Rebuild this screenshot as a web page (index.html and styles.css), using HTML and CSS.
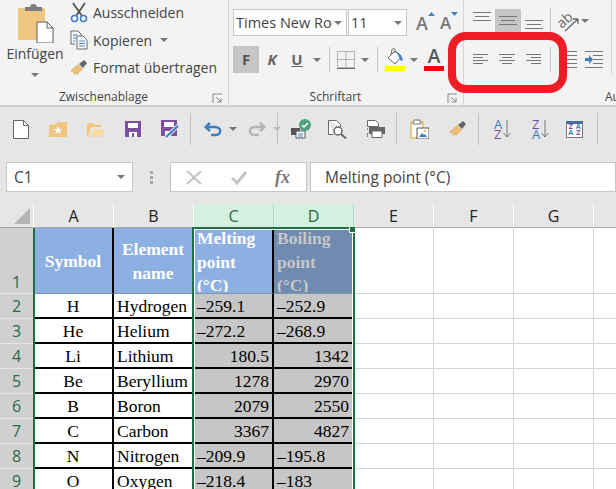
FILE: index.html
```html
<!DOCTYPE html>
<html lang="de">
<head>
<meta charset="UTF-8" />
<title>Excel</title>
<link rel="stylesheet" href="styles.css">
</head>
<body>
  <!-- Ribbon -->
  <div class="ribbon">
    <div class="group group-clip">
      <div class="group-body clip-body">
        <div class="paste">
          <svg width="40" height="41" viewBox="0 0 40 41">
            <rect x="1" y="6" width="27" height="32" fill="#efc67f"/>
            <path d="M8 9V5h5c0-4 7-4 7 0h5v4z" fill="#7d7d7d"/>
            <path d="M20 20h10l6 6v15H20z" fill="#fff" stroke="#5f5f5f" stroke-width="1"/>
            <path d="M30 20v6h6" fill="none" stroke="#5f5f5f"/>
          </svg>
          <span class="paste-label">Einfügen</span>
          <span class="caret"></span>
        </div>
        <div class="clip-list">
          <div class="clip-row">
            <svg width="18" height="21" viewBox="0 0 18 21">
              <path d="M3 1l9 13M15 1L6 14" stroke="#555" stroke-width="1.8" fill="none"/>
              <circle cx="4.5" cy="16.5" r="3" fill="none" stroke="#3f7fbf" stroke-width="1.5"/>
              <circle cx="13.5" cy="16.5" r="3" fill="none" stroke="#3f7fbf" stroke-width="1.5"/>
            </svg>
            <span>Ausschneiden</span>
          </div>
          <div class="clip-row">
            <svg width="18" height="20" viewBox="0 0 18 20">
              <path d="M1 1h7l3 3v2M1 1v13h4" fill="#fff" stroke="#666"/>
              <path d="M7 6h6l4 4v9H7z" fill="#fff" stroke="#666"/>
              <path d="M3 5h4M3 8h3M3 11h2M9 11h6M9 13.500h6M9 16h6" stroke="#3f7fbf"/>
            </svg>
            <span>Kopieren</span>
            <span class="caret caret-copy"></span>
          </div>
          <div class="clip-row">
            <svg width="18" height="18" viewBox="0 0 18 18">
              <path d="M1 11l7-6 5 5-6 6-2-1-1 1-1-3-2 0z" fill="#e9be7a"/>
              <path d="M9 5l4 4 4-5-3-3z" fill="#666"/>
            </svg>
            <span>Format übertragen</span>
          </div>
        </div>
      </div>
      <div class="group-foot">
        <span class="group-label">Zwischenablage</span>
        <svg class="launcher" width="11" height="11" viewBox="0 0 11 11"><path d="M1 10V1h9M4 4l5 5M9 5v4H5" fill="none" stroke="#888"/></svg>
      </div>
    </div>

    <div class="group group-font">
      <div class="group-body font-body">
        <div class="font-row">
          <div class="select select-font"><span>Times New Ro</span><span class="caret"></span></div>
          <div class="select select-size"><span>11</span><span class="caret"></span></div>
          <div class="grow-btn">
            <span class="big-a">A</span>
            <svg width="7" height="4" viewBox="0 0 7 4"><path d="M0 4l3.500-4L7 4z" fill="#3f7fbf"/></svg>
          </div>
          <div class="grow-btn shrink-btn">
            <span class="big-a small-a">A</span>
            <svg width="7" height="4" viewBox="0 0 7 4"><path d="M0 0l3.500 4L7 0z" fill="#3f7fbf"/></svg>
          </div>
        </div>
        <div class="font-row format-row">
          <span class="fmt fmt-on">F</span>
          <span class="fmt fmt-k">K</span>
          <span class="fmt fmt-u">U</span>
          <span class="caret"></span>
          <span class="vsep"></span>
          <svg class="border-icon" width="18" height="18" viewBox="0 0 18 18">
            <path d="M.5.500h17v16H.5zM9 .5v16M.5 8.500h17" fill="none" stroke="#777" stroke-dasharray="1 1"/>
            <path d="M0 17.500h18" stroke="#666"/>
          </svg>
          <span class="caret"></span>
          <span class="vsep"></span>
          <div class="color-btn">
            <svg width="20" height="17" viewBox="0 0 20 17">
              <path d="M3 10l7-7 6 6-6 7z" fill="#fff" stroke="#666"/>
              <path d="M6 7l1-5c0-2 3-2 3 0v3" fill="none" stroke="#666"/>
              <path d="M11 3l5 4 2 5-2 1-2-4z" fill="#3f7fbf"/>
            </svg>
            <span class="color-bar bar-yellow"></span>
          </div>
          <span class="caret"></span>
          <div class="color-btn font-color">
            <span class="color-a">A</span>
            <span class="color-bar bar-red"></span>
          </div>
        </div>
      </div>
      <div class="group-foot">
        <span class="group-label">Schriftart</span>
        <svg class="launcher" width="11" height="11" viewBox="0 0 11 11"><path d="M1 10V1h9M4 4l5 5M9 5v4H5" fill="none" stroke="#888"/></svg>
      </div>
    </div>

    <div class="group group-align">
      <div class="group-body align-body">
        <div class="align-row">
          <svg class="al" width="26" height="23" viewBox="0 0 26 23"><path d="M4 3.500h18M6 7.500h14M4 11.500h18" stroke="#777"/></svg>
          <svg class="al al-on" width="26" height="23" viewBox="0 0 26 23"><path d="M4 7.500h18M6 11.500h14M4 15.500h18" stroke="#777"/></svg>
          <svg class="al" width="26" height="23" viewBox="0 0 26 23"><path d="M4 11.500h18M6 15.500h14M4 19.500h18" stroke="#777"/></svg>
          <span class="vsep vsep-align"></span>
          <svg class="orient" width="22" height="22" viewBox="0 0 22 22">
            <path d="M7 21L20 9M20 9h-5M20 9v5" fill="none" stroke="#666" stroke-width="1.300"/>
            <text x="0" y="15" class="orient-text" transform="rotate(-42 7 12)">ab</text>
          </svg>
          <span class="caret"></span>
        </div>
        <div class="align-row align-row-2">
          <svg class="al2" width="15" height="11" viewBox="0 0 15 11"><path d="M0 .5h15M0 3.500h10M0 6.500h15M0 9.500h10" stroke="#777"/></svg>
          <svg class="al2" width="16" height="11" viewBox="0 0 16 11"><path d="M0 .5h16M3 3.500h10M0 6.500h16M3 9.500h10" stroke="#777"/></svg>
          <svg class="al2" width="15" height="11" viewBox="0 0 15 11"><path d="M0 .5h15M5 3.500h10M0 6.500h15M5 9.500h10" stroke="#777"/></svg>
          <span class="vsep vsep-align2"></span>
          <svg class="indent" width="10" height="17" viewBox="0 0 10 17"><path d="M0 .5h10M0 4.500h10M0 8.500h10M0 12.500h10M0 16.500h10" stroke="#777"/></svg>
          <svg class="indent indent-2" width="19" height="17" viewBox="0 0 19 17">
            <path d="M0 .5h18M8 4.500h10M8 8.500h10M8 12.500h10M0 16.500h18" stroke="#777"/>
            <path d="M0 7h4V4l4 4.500L4 13v-3H0z" fill="#3f7fbf"/>
          </svg>
        </div>
      </div>
      <div class="group-foot foot-align"><span class="group-label">Ausrichtung</span></div>
    </div>

    <!-- Red marking drawn over the ribbon -->
    <div class="red-mark"></div>
  </div>

  <!-- Quick access toolbar -->
  <div class="qat">
    <svg width="16" height="19" viewBox="0 0 16 19"><path d="M.5.500h10l5 5v13H.5z" fill="#fff" stroke="#666"/><path d="M10.500.5v5h5" fill="none" stroke="#666"/></svg>
    <svg width="18" height="16" viewBox="0 0 18 16"><path d="M0 4l7-1 2-2h9v15H0z" fill="#efc67f"/><path d="M9 5l1.200 3h3l-2.400 2 1 3L9 11.200 6.200 13l1-3-2.400-2h3z" fill="#fff"/></svg>
    <svg width="18" height="15" viewBox="0 0 18 15"><path d="M0 15V3l2-2h4l2 2h6v2H4l-3 10z" fill="#efc67f"/><path d="M3 15l3-8h12l-3 8z" fill="#f6d9a4"/></svg>
    <svg width="16" height="16" viewBox="0 0 16 16"><path d="M0 0h16v16H0z" fill="#7f4f9f"/><path d="M3 2h10v5H3z" fill="#fff"/><path d="M4 11h8v5H4z" fill="#fff"/><path d="M7 12h2v4H7z" fill="#7f4f9f"/></svg>
    <svg width="18" height="18" viewBox="0 0 18 18"><path d="M0 0h16v16H0z" fill="#7f4f9f"/><path d="M3 2h10v5H3z" fill="#fff"/><path d="M4 11h6v5H4z" fill="#fff"/><path d="M5 17L17 6" stroke="#e6e6e6" stroke-width="4"/><path d="M5 17L17 6" stroke="#3f7fbf" stroke-width="2"/></svg>
    <span class="qsep qsep-first"></span>
    <svg width="18" height="15" viewBox="0 0 18 15"><path d="M6 1L1.500 5 6 9M2 5h9c7 0 7 8 0 8H7" fill="none" stroke="#3f7fbf" stroke-width="2.400"/></svg>
    <span class="caret q-caret"></span>
    <svg width="18" height="15" viewBox="0 0 18 15"><path d="M12 1l4.500 4L12 9M16 5H7c-7 0-7 8 0 8h4" fill="none" stroke="#b4b4b4" stroke-width="2.400"/></svg>
    <span class="caret caret-off q-caret q-caret-last"></span>
    <span class="qsep"></span>
    <svg class="q-print" width="20" height="20" viewBox="0 0 20 20"><path d="M0 9h9v7H0z" fill="#555"/><path d="M5 12h9v7H5z" fill="#fff" stroke="#555"/><path d="M7 15h5M7 17h5" stroke="#3f7fbf"/><circle cx="14" cy="6" r="6" fill="#4f9f7f"/><path d="M11 6l2 2 4-4" fill="none" stroke="#fff" stroke-width="1.400"/></svg>
    <svg class="q-preview" width="19" height="19" viewBox="0 0 19 19"><path d="M.5.500h8l4 4v3M.5.500v14h5" fill="#fff" stroke="#666"/><circle cx="10" cy="11" r="4" fill="#fff" stroke="#666" stroke-width="1.500"/><path d="M13 14l5 4.500" stroke="#666" stroke-width="2"/></svg>
    <svg width="20" height="18" viewBox="0 0 20 18"><path d="M2.500.500h8l3 3v3h-11z" fill="#fff" stroke="#666"/><path d="M2.500 13v4M2.500 8v2" stroke="#888"/><path d="M4 7h16v7H4z" fill="#666"/><path d="M7 11h10v6.500H7z" fill="#fff" stroke="#666"/></svg>
    <span class="qsep"></span>
    <svg width="19" height="20" viewBox="0 0 19 20"><path d="M0 2h14v18H0z" fill="#efc67f"/><path d="M2 4h10v14H2z" fill="#fff"/><path d="M4 3V1h6v2h1v2H3V3z" fill="#fff" stroke="#777"/><path d="M7 9h12v11H7z" fill="#fff" stroke="#555"/><path d="M9 18l3-4 2 2 1-1 2 3z" fill="#3f7fbf"/><circle cx="15" cy="12" r="1.200" fill="#efb65f"/></svg>
    <svg width="18" height="18" viewBox="0 0 18 18"><path d="M1 11l7-6 5 5-6 6-2-1-1 1-1-3-2 0z" fill="#e9be7a"/><path d="M9 5l4 4 4-5-3-3z" fill="#666"/></svg>
    <span class="qsep"></span>
    <div class="sort-btn sort-first"><span class="sort-az"><b class="s-blue">A</b><b class="s-purple">Z</b></span><svg width="8" height="18" viewBox="0 0 8 18"><path d="M4 0v17M.5 13L4 17l3.500-4" fill="none" stroke="#777"/></svg></div>
    <div class="sort-btn sort-second"><span class="sort-az"><b class="s-purple">Z</b><b class="s-blue">A</b></span><svg width="8" height="18" viewBox="0 0 8 18"><path d="M4 0v17M.5 13L4 17l3.500-4" fill="none" stroke="#777"/></svg></div>
    <div class="sort-custom">
      <span class="s-purple">Z</span><span class="s-blue">A</span><span class="s-blue">A</span><span class="s-purple">Z</span>
    </div>
    <span class="qsep qsep-last"></span>
  </div>

  <!-- Formula bar -->
  <div class="formula">
    <div class="name-box"><span>C1</span><span class="caret"></span></div>
    <div class="grip"><i></i><i></i><i></i></div>
    <div class="fx-box">
      <svg width="16" height="15" viewBox="0 0 16 15"><path d="M1 1l14 13M15 1L1 14" stroke="#c4c4c4" stroke-width="2"/></svg>
      <svg width="16" height="15" viewBox="0 0 16 15"><path d="M1 8l5 5L15 2" fill="none" stroke="#c4c4c4" stroke-width="3"/></svg>
      <span class="fx">fx</span>
    </div>
    <div class="formula-input">Melting point (°C)</div>
  </div>

  <!-- Sheet -->
  <div class="sheet">
    <table class="cells">
      <colgroup>
        <col class="col-head"><col class="col"><col class="col"><col class="col"><col class="col"><col class="col"><col class="col"><col class="col"><col class="col-rest">
      </colgroup>
      <tr class="head-row">
        <th class="corner"><svg width="16" height="16" viewBox="0 0 16 16"><path d="M16 0v16H0z" fill="#b4b4b4"/></svg></th>
        <th>A</th><th>B</th><th class="on">C</th><th class="on">D</th><th>E</th><th>F</th><th>G</th><th></th>
      </tr>
      <tr class="title-row">
        <th class="rownum rownum-1">1</th>
        <td class="t t-mid">Symbol</td>
        <td class="t t-mid">Element name</td>
        <td class="t t-top"><div class="t-clip">Melting point (°C)</div></td>
        <td class="t t-top t-sel"><div class="t-clip">Boiling point (°C)</div></td>
        <td></td><td></td><td></td><td></td>
      </tr>
      <tr><th class="rownum">2</th><td class="d ctr">H</td><td class="d">Hydrogen</td><td class="d sel">–259.1</td><td class="d sel">–252.9</td><td></td><td></td><td></td><td></td></tr>
      <tr><th class="rownum">3</th><td class="d ctr">He</td><td class="d">Helium</td><td class="d sel">–272.2</td><td class="d sel">–268.9</td><td></td><td></td><td></td><td></td></tr>
      <tr><th class="rownum">4</th><td class="d ctr">Li</td><td class="d">Lithium</td><td class="d sel num">180.5</td><td class="d sel num">1342</td><td></td><td></td><td></td><td></td></tr>
      <tr><th class="rownum">5</th><td class="d ctr">Be</td><td class="d">Beryllium</td><td class="d sel num">1278</td><td class="d sel num">2970</td><td></td><td></td><td></td><td></td></tr>
      <tr><th class="rownum">6</th><td class="d ctr">B</td><td class="d">Boron</td><td class="d sel num">2079</td><td class="d sel num">2550</td><td></td><td></td><td></td><td></td></tr>
      <tr><th class="rownum">7</th><td class="d ctr">C</td><td class="d">Carbon</td><td class="d sel num">3367</td><td class="d sel num">4827</td><td></td><td></td><td></td><td></td></tr>
      <tr><th class="rownum">8</th><td class="d ctr">N</td><td class="d">Nitrogen</td><td class="d sel">–209.9</td><td class="d sel">–195.8</td><td></td><td></td><td></td><td></td></tr>
      <tr><th class="rownum">9</th><td class="d ctr">O</td><td class="d">Oxygen</td><td class="d sel">–218.4</td><td class="d sel">–183</td><td></td><td></td><td></td><td></td></tr>
    </table>
    <!-- Selection frame and table edge lie over the cells -->
    <div class="edge-a"></div>
    <div class="selection"><span class="handle"></span></div>
  </div>
</body>
</html>
```

FILE: styles.css
```css
/* Excel window, cropped */

html, body {
  margin: 0;
  height: 489px;
  overflow: hidden;
}

body {
  background-color: #e6e6e6;
  font-family: "Open Sans", "Noto Sans", sans-serif;
  color: #444;
}

svg {
  display: block;
  flex: none;
}

.caret {
  display: block;
  flex: none;
  width: 0;
  height: 0;
  border-left: 4px solid transparent;
  border-right: 4px solid transparent;
  border-top: 4px solid #777;
}

.caret-off {
  border-top-color: #bcbcbc;
}

/* Ribbon */
.ribbon {
  position: relative;
  display: flex;
  height: 105px;
  background-color: #f3f3f3;
  border-bottom: 2px solid #cfcfcf;
  overflow: hidden;
}

.group {
  display: flex;
  flex-direction: column;
  flex: none;
  box-sizing: border-box;
  border-right: 1px solid #d4d4d4;
}

.group-clip { width: 229px; }
.group-font { width: 235px; }
.group-align { width: 152px; border-right: none; }

.group-body {
  height: 88px;
}

.group-foot {
  display: flex;
  align-items: center;
  height: 17px;
  padding-right: 5px;
}

.group-label {
  flex: 1;
  text-align: center;
  font-size: 12px;
  color: #444;
  margin-right: 5px;
}

.foot-align .group-label {
  flex: none;
  margin-left: 141px;
  white-space: nowrap;
}

.launcher {
  margin-top: 3px;
}

/* Clipboard group */
.clip-body {
  display: flex;
}

.paste {
  display: flex;
  flex-direction: column;
  align-items: center;
  width: 70px;
  padding-top: 2px;
}

.paste svg {
  margin-left: 4px;
}

.paste-label {
  font-size: 14px;
  margin-top: 1px;
}

.paste .caret {
  margin-top: 10px;
}

.clip-list {
  display: flex;
  flex-direction: column;
  margin-top: -1px;
}

.clip-row {
  display: flex;
  align-items: center;
  gap: 5px;
  height: 27.500px;
  font-size: 14px;
  white-space: nowrap;
}

.caret-copy {
  margin-left: 3px;
}

/* Font group */
.font-body {
  padding: 9px 0 0 4px;
}

.font-row {
  display: flex;
  align-items: center;
  height: 27px;
}

.select {
  display: flex;
  align-items: center;
  justify-content: space-between;
  box-sizing: border-box;
  height: 27px;
  background-color: #fff;
  border: 1px solid #c6c6c6;
  font-size: 14.500px;
  padding: 0 4px 0 2px;
  white-space: nowrap;
}

.select-font { width: 114px; }
.select-size { width: 59px; margin-left: 1px; }

.grow-btn {
  display: flex;
  align-items: flex-start;
  margin-left: 9px;
  width: 22px;
}

.shrink-btn {
  margin-left: 2px;
}

.big-a {
  font-size: 18px;
  line-height: 22px;
  font-weight: 600;
  color: #777;
}

.small-a {
  font-size: 17px;
}

.format-row {
  margin-top: 10px;
}

.fmt {
  display: block;
  width: 26px;
  height: 27px;
  line-height: 27px;
  text-align: center;
  font-size: 15px;
  font-weight: 700;
  color: #666;
  flex: none;
}

.fmt-on { background-color: #c6c6c6; color: #555; }
.fmt-k { font-style: italic; }
.fmt-u { text-decoration: underline; margin-left: -1px; margin-right: 3px; }

.vsep {
  display: block;
  flex: none;
  width: 1px;
  height: 25px;
  background-color: #c6c6c6;
  margin: 0 7px 0 8px;
}

.border-icon {
  margin-right: 6px;
}

.color-btn {
  display: flex;
  flex-direction: column;
  align-items: center;
  width: 20px;
  margin-right: 5px;
}

.font-color {
  margin-left: 6px;
  margin-right: 0;
}

.color-bar {
  display: block;
  width: 20px;
  height: 5px;
  margin-top: 1px;
}

.bar-yellow { background-color: #ffff00; }
.bar-red { background-color: #ff0000; }

.color-a {
  font-size: 19px;
  line-height: 17px;
  font-weight: 600;
  color: #555;
}

/* Alignment group */
.align-body {
  box-sizing: border-box;
  width: 148px;
  height: 75px;
  margin-bottom: 13px;
  padding: 9px 0 0 5px;
  border-right: 1px solid #d4d4d4;
}

.align-row {
  display: flex;
  align-items: center;
  height: 23px;
}

.al-on {
  background-color: #c6c6c6;
}

.vsep-align {
  margin: 0 7px 0 3px;
}

.orient {
  margin-right: 1px;
}

.orient-text {
  font-size: 14px;
  fill: #666;
}

.align-row-2 {
  margin-top: 19px;
  margin-left: -1px;
  height: 17px;
}

.al2 {
  margin-left: 5px;
  margin-right: 6px;
}

.vsep-align2 {
  margin: 0 16px 0 3px;
}

.indent {
  margin-right: 8px;
}

/* Red marking */
.red-mark {
  position: absolute;
  left: 448px;
  top: 32px;
  width: 119px;
  height: 61px;
  box-sizing: border-box;
  border: 8px solid #ee1c25;
  border-radius: 18px;
}

/* Quick access toolbar */
.qat {
  display: flex;
  align-items: center;
  gap: 20px;
  height: 44px;
  padding: 0 0 0 13px;
}

.qsep {
  display: block;
  flex: none;
  width: 1px;
  height: 32px;
  background-color: #c0c0c0;
  margin: 0 -7px 0 -9px;
}

.q-caret {
  margin: 0 -9px 0 -13px;
}

.q-caret-last {
  margin-right: -15px;
}

.q-print { margin-right: -3px; }
.q-preview { margin-right: -2px; }

.sort-btn {
  display: flex;
  align-items: center;
  gap: 1px;
  width: 18px;
}

.sort-first { margin-left: 2px; }
.sort-second { margin-right: -4px; }

.sort-az {
  display: flex;
  flex-direction: column;
  font-size: 13px;
  line-height: 10px;
}

.sort-az b {
  font-weight: 400;
}

.s-blue { color: #3f7fbf; }
.s-purple { color: #7f4f9f; }

.sort-custom {
  display: grid;
  grid-template-columns: 1fr 1fr;
  box-sizing: border-box;
  width: 17px;
  height: 17px;
  border: 1px solid #777;
  border-top: 3px solid #3f6f9f;
  background-color: #fff;
  font-size: 7px;
  line-height: 6px;
  font-weight: 700;
  text-align: center;
}

.qsep-last {
  margin-left: -6px;
}

/* Formula bar */
.formula {
  display: flex;
  align-items: stretch;
  height: 30px;
  padding-left: 6px;
  margin-top: 11px;
  box-sizing: border-box;
}

.name-box, .fx-box, .formula-input {
  box-sizing: border-box;
  background-color: #fff;
  border: 1px solid #c6c6c6;
}

.name-box {
  display: flex;
  align-items: center;
  justify-content: space-between;
  width: 127px;
  padding: 0 7px;
  font-size: 15.500px;
}

.grip {
  display: flex;
  flex-direction: column;
  justify-content: center;
  gap: 2px;
  width: 37px;
  align-items: center;
}

.grip i {
  display: block;
  width: 3px;
  height: 3px;
  background-color: #a8a8a8;
}

.fx-box {
  display: flex;
  align-items: center;
  gap: 29px;
  width: 137px;
  padding-left: 15px;
}

.fx {
  font-family: "Liberation Serif", serif;
  font-style: italic;
  font-weight: 700;
  font-size: 18px;
  color: #777;
  margin-left: -1px;
}

.formula-input {
  flex: 1;
  margin-left: 3px;
  padding-left: 14px;
  font-size: 15.500px;
  line-height: 28px;
  white-space: nowrap;
}

/* Sheet */
.sheet {
  position: relative;
  margin-top: 12px;
}

.cells {
  table-layout: fixed;
  width: 617px;
  border-collapse: separate;
  border-spacing: 0;
  background-color: #fff;
}

.col-head { width: 34px; }
.col { width: 80px; }
.col-rest { width: 23px; }

.cells td, .cells th {
  box-sizing: border-box;
  padding: 0;
  overflow: hidden;
  white-space: nowrap;
}

.cells td {
  height: 25px;
  border-right: 1px solid #d4d4d4;
  border-bottom: 1px solid #d4d4d4;
}

.head-row th {
  height: 24px;
  background-color: #e6e6e6;
  border-right: 1px solid #fff;
  border-bottom: 1px solid #a8a8a8;
  font-size: 16px;
  font-weight: 400;
  color: #222;
  vertical-align: middle;
}

.head-row .on {
  background-color: #d3f0e0;
  color: #1f6b45;
  border-right-color: #b8d8c6;
  border-bottom-color: #1f7145;
}

.corner svg {
  margin: 0 0 0 14px;
}

.rownum {
  background-color: #d0d0d0;
  border-right: 1px solid #a8a8a8;
  border-bottom: 1px solid #e6e6e6;
  font-size: 16px;
  font-weight: 400;
  color: #2a6b4c;
  text-align: center;
}

.rownum-1 {
  vertical-align: bottom;
}

.title-row td, .title-row th {
  height: 66px;
}

.cells .t {
  background-color: #8db0e2;
  color: #fff;
  font-family: "Liberation Serif", serif;
  font-weight: 700;
  font-size: 17.500px;
  line-height: 23.500px;
  white-space: normal;
  border-right: 2px solid #000;
  border-bottom: 1px solid #7f93ad;
}

.cells .t-mid {
  text-align: center;
  vertical-align: middle;
  padding: 2px 6px 0;
}

.cells .t-top {
  vertical-align: top;
  padding: 0 10px 0 3px;
}

.t-clip {
  height: 65px;
  margin-top: -1px;
  overflow: hidden;
}

.cells .t-sel {
  background-color: #6f8bb0;
  color: #c6c6c6;
}

.cells .d {
  font-family: "Liberation Serif", serif;
  font-size: 17.500px;
  color: #000;
  padding: 1px 3px 0;
  border-right: 2px solid #000;
  border-bottom: 2px solid #000;
}

.cells .ctr { text-align: center; }
.cells .num { text-align: right; }
.cells .sel { background-color: #c6c6c6; }

.edge-a {
  position: absolute;
  left: 33px;
  top: 24px;
  bottom: 0;
  width: 2px;
  background-color: #1f7145;
}

.selection {
  position: absolute;
  left: 192px;
  top: 23px;
  width: 163px;
  height: 300px;
  box-sizing: border-box;
  border: 2px solid #1f7145;
  box-shadow: inset 0 0 0 1px #fff;
}

.handle {
  position: absolute;
  right: -2px;
  top: -2px;
  width: 5px;
  height: 5px;
  background-color: #1f7145;
  border-left: 1px solid #fff;
  border-bottom: 1px solid #fff;
}
```
